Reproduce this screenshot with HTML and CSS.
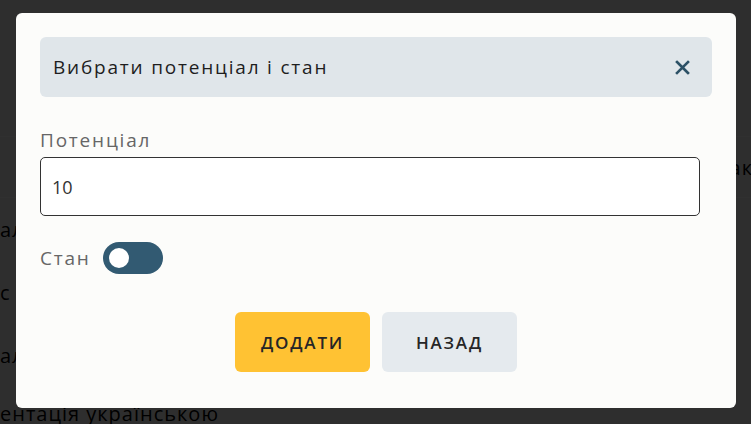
FILE: index.html
```html
<!DOCTYPE html>
<html lang="uk">
<head>
<meta charset="utf-8">
<title>Вибрати потенціал і стан</title>
<link rel="stylesheet" href="styles.css">
</head>
<body>
<div class="page">
  <div class="row row-lined"><span class="cell-right">ак</span></div>
  <div class="row">ал</div>
  <div class="row">с</div>
  <div class="row">ал</div>
  <div class="row-last">ентація українською</div>
</div>
<div class="overlay">
  <div class="modal">
    <div class="modal-header">
      <span class="modal-title">Вибрати потенціал і стан</span>
      <button class="close-btn" aria-label="Закрити">
        <svg width="15" height="15" viewBox="0 0 15 15"><path d="M2 2 L13 13 M13 2 L2 13" stroke="currentColor" stroke-width="2.6" stroke-linecap="square" fill="none"/></svg>
      </button>
    </div>
    <div class="form">
      <label class="field-label">Потенціал</label>
      <div class="input">10</div>
      <div class="state-row">
        <span class="state-label">Стан</span>
        <span class="toggle"><span class="knob"></span></span>
      </div>
    </div>
    <div class="actions">
      <button class="btn btn-primary">ДОДАТИ</button>
      <button class="btn btn-secondary">НАЗАД</button>
    </div>
  </div>
</div>
</body>
</html>
```
FILE: styles.css
```css
* { box-sizing: border-box; }
html, body { margin: 0; padding: 0; }
body {
  width: 751px;
  height: 424px;
  overflow: hidden;
  font-family: "Open Sans", "Noto Sans", sans-serif;
  background: #f4f4f4;
  color: #000;
}
.page {
  padding-top: 136px;
  font-size: 20px;
  letter-spacing: 1px;
}
.row {
  height: 63px;
  display: flex;
  align-items: center;
}
.row-lined {
  height: 62px;
  border-top: 1px solid #ffffff;
  border-bottom: 1px solid #ffffff;
  justify-content: flex-end;
}
.row-last {
  padding-top: 15px;
  line-height: 24px;
  white-space: nowrap;
}
.cell-right { margin-right: -2px; }
.overlay {
  position: fixed;
  inset: 0;
  background: rgba(0, 0, 0, 0.81);
  display: flex;
  align-items: flex-start;
  padding: 13px 0 0 16px;
}
.modal {
  width: 720px;
  background: #fcfcfa;
  border-radius: 6px;
  padding: 24px 24px 36px;
}
.modal-header {
  height: 60px;
  background: #e0e6ea;
  border-radius: 6px;
  display: flex;
  align-items: center;
  justify-content: space-between;
  padding: 0 22px 0 13px;
}
.modal-title {
  font-size: 19px;
  color: #1e1e1e;
  letter-spacing: 1.8px;
}
.close-btn {
  border: 0;
  background: none;
  padding: 0;
  width: 15px;
  height: 15px;
  color: #2c5166;
  display: flex;
}
.form {
  padding-right: 12px;
  display: flex;
  flex-direction: column;
}
.field-label {
  margin-top: 31px;
  font-size: 19px;
  line-height: 24px;
  color: #666;
  letter-spacing: 1.8px;
}
.input {
  margin-top: 5px;
  height: 59px;
  border: 1px solid #333;
  border-radius: 5px;
  background: #fff;
  padding: 0 11px;
  display: flex;
  align-items: center;
  font-size: 18px;
  color: #333;
}
.state-row {
  margin-top: 26px;
  display: flex;
  align-items: center;
  gap: 12px;
}
.state-label {
  font-size: 19px;
  color: #666;
  letter-spacing: 1.8px;
}
.toggle {
  width: 60px;
  height: 32px;
  border-radius: 16px;
  background: #325a72;
  display: flex;
  align-items: center;
  padding: 0 6px;
}
.knob {
  width: 20px;
  height: 20px;
  border-radius: 50%;
  background: #fff;
}
.actions {
  margin-top: 38px;
  display: flex;
  justify-content: center;
  gap: 12px;
}
.btn {
  width: 135px;
  height: 60px;
  border: 0;
  border-radius: 6px;
  font-family: "Open Sans", "Noto Sans", sans-serif;
  font-size: 17px;
  font-weight: 600;
  color: #262626;
  letter-spacing: 1.8px;
}
.btn-primary { background: #ffc233; }
.btn-secondary { background: #e5eaee; }
```
